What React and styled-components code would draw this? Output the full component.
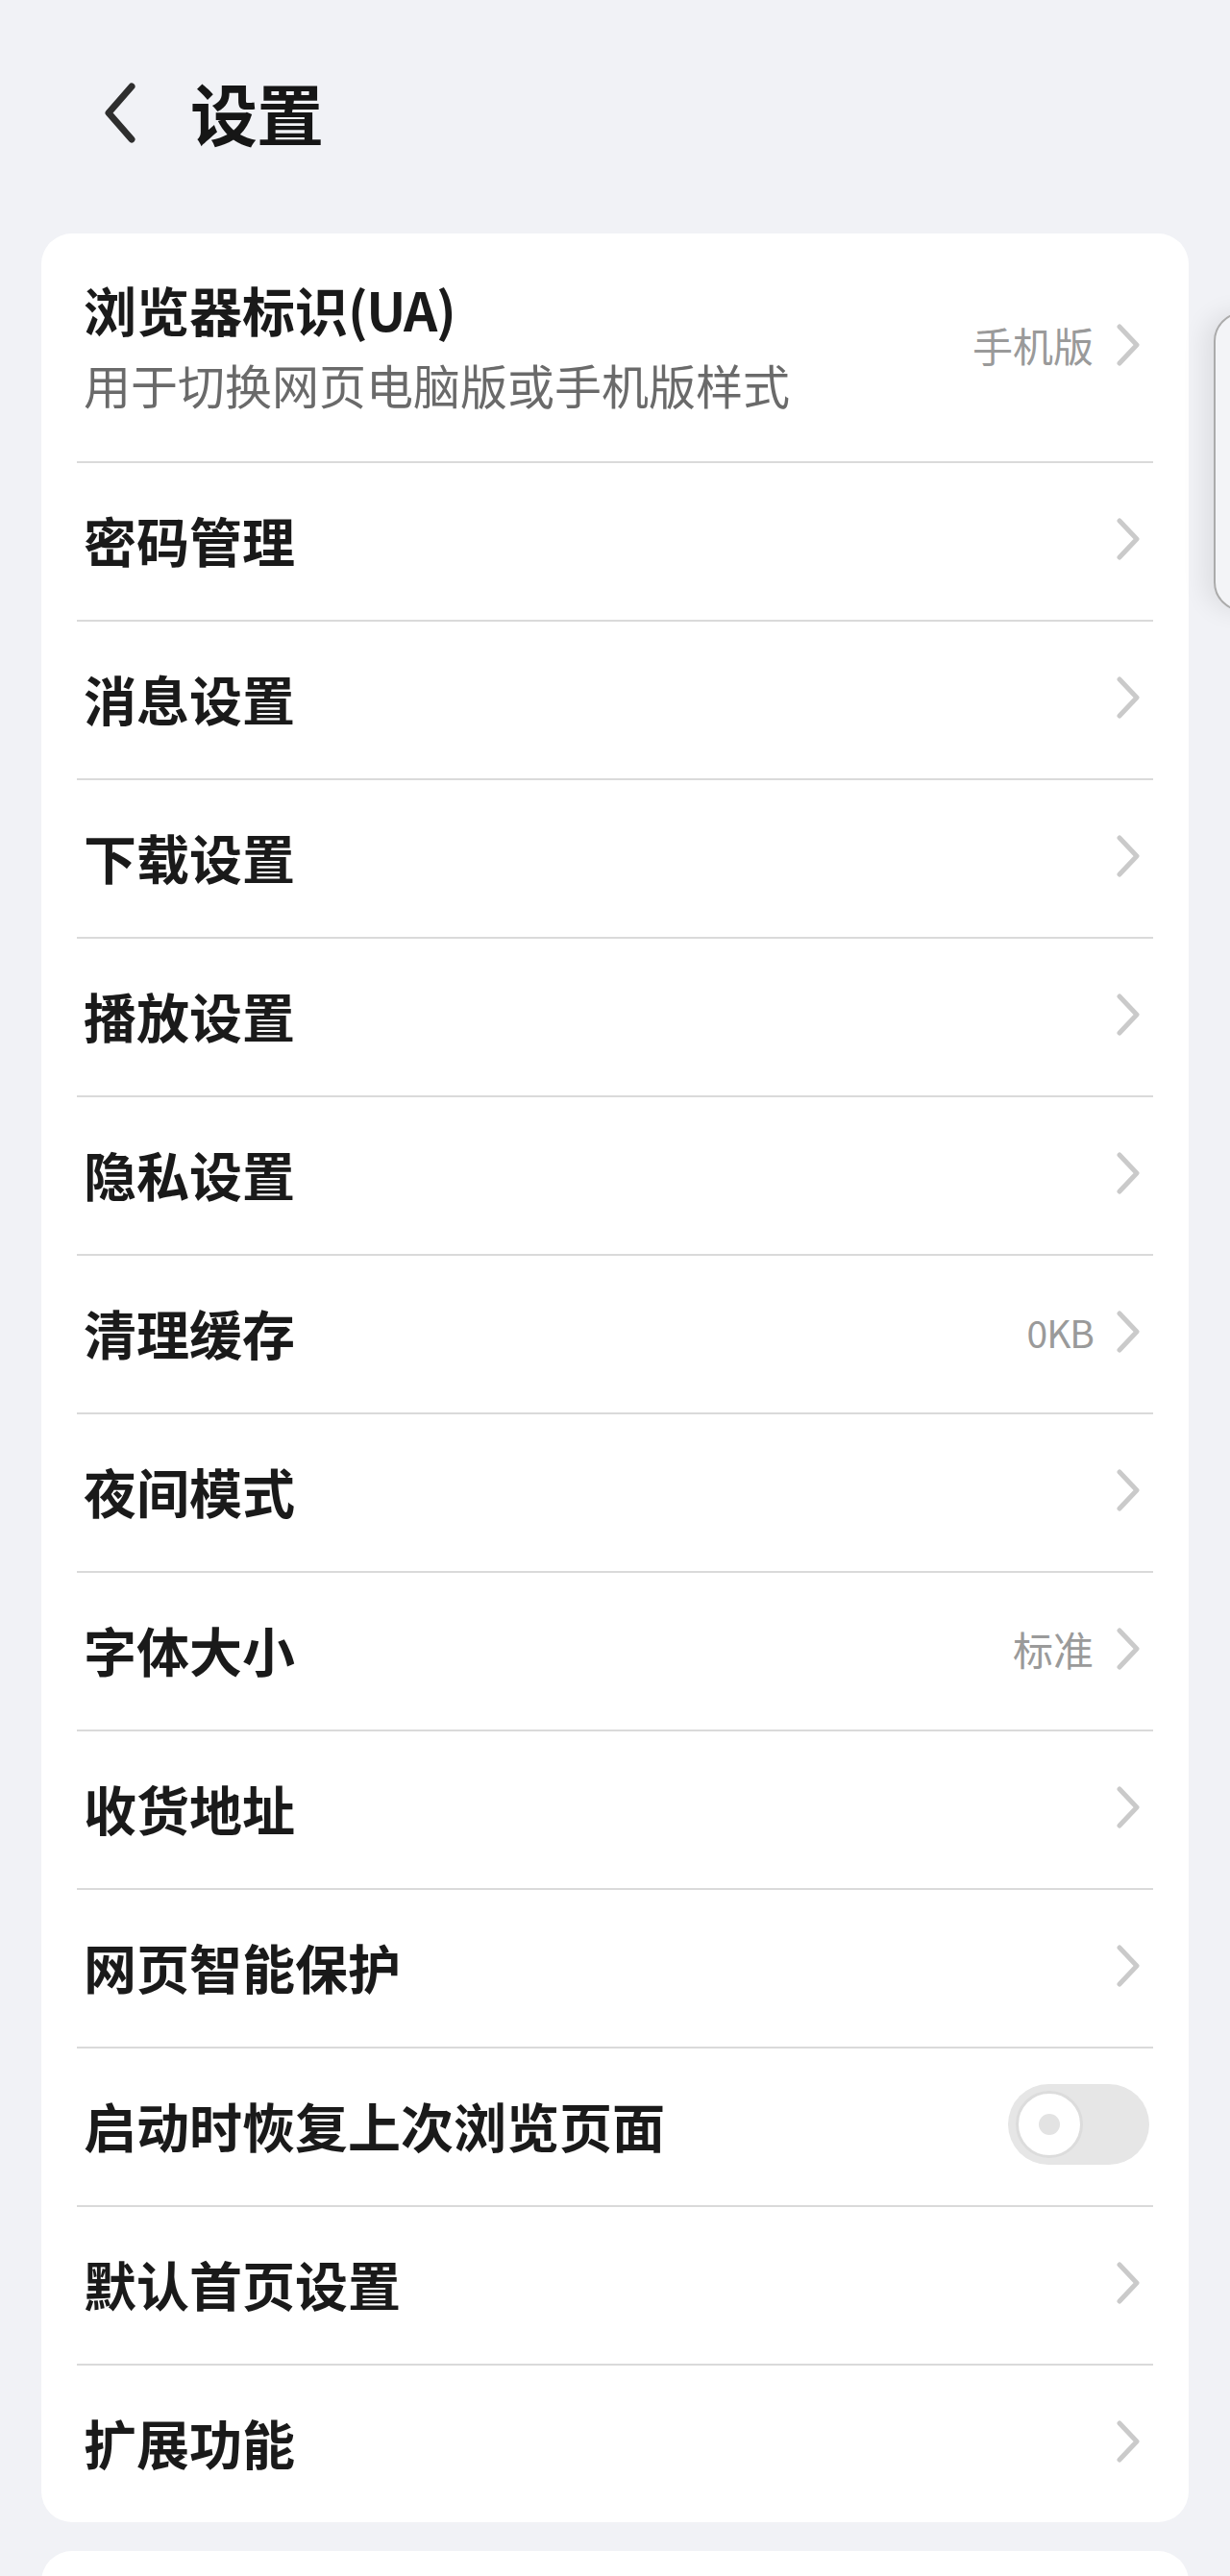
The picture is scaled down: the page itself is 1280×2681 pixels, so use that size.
import React, { useState } from 'react'
import styled, { createGlobalStyle } from 'styled-components'

const GlobalStyle = createGlobalStyle`
  html, body {
    margin: 0;
    padding: 0;
    background: #f1f2f6;
  }
  body {
    font-family: "Noto Sans CJK SC", "Noto Sans", Roboto, sans-serif;
    -webkit-font-smoothing: antialiased;
  }
  * { box-sizing: border-box; }
`

const Page = styled.div`
  position: relative;
  width: 1280px;
  height: 2681px;
  overflow: hidden;
  padding: 0 43px;
`

const Header = styled.div`
  display: flex;
  align-items: center;
  height: 236px;
  padding-left: 65px;
  padding-bottom: 2px;
`

const BackButton = styled.button`
  display: flex;
  align-items: center;
  justify-content: center;
  width: 33px;
  height: 63px;
  padding: 0;
  margin-right: 57px;
  border: none;
  background: none;
  cursor: pointer;
`

const Title = styled.h1`
  margin: 0;
  font-size: 70px;
  font-weight: 700;
  line-height: 1;
  color: #161616;
  letter-spacing: -1px;
`

const Card = styled.div`
  background: #fff;
  border-radius: 32px;
  margin-top: 7px;
  margin-bottom: 30px;
  padding-bottom: ${p => p.$pad || 0}px;
`

const Row = styled.div`
  display: flex;
  align-items: center;
  margin: 0 37px;
  padding: 0 14px 5px 7px;
  height: ${p => (p.$tall ? 237 : 165)}px;
  border-top: ${p => (p.$first ? 'none' : '2px solid #dadada')};
  cursor: pointer;
`

const Texts = styled.div`
  flex: 1;
  display: flex;
  flex-direction: column;
  gap: 26px;
`

const Label = styled.div`
  font-size: 55px;
  font-weight: 700;
  line-height: 1;
  color: #1a1a1a;
`

const Latin = styled.span`
  letter-spacing: -1.5px;
`

const Sub = styled.div`
  font-size: 49px;
  font-weight: 400;
  line-height: 1;
  color: #6a6a6a;
`

const Value = styled.span`
  font-size: ${p => (p.$latin ? 39 : 42)}px;
  color: #9a9a9a;
  margin-right: 24px;
  line-height: 1;
  letter-spacing: ${p => (p.$latin ? '-1px' : '0')};
`

const Switch = styled.div`
  position: relative;
  width: 147px;
  height: 84px;
  margin-right: -10px;
  border-radius: 42px;
  background: #e6e6e6;
  cursor: pointer;
`

const Knob = styled.div`
  position: absolute;
  top: 7px;
  left: ${p => (p.$on ? 71 : 8)}px;
  width: 70px;
  height: 70px;
  border-radius: 50%;
  background: #fff;
  border: 3px solid #dcdcdc;
  display: flex;
  align-items: center;
  justify-content: center;
  transition: left 0.2s;

  &::after {
    content: '';
    width: 22px;
    height: 22px;
    border-radius: 50%;
    background: #e3e3e3;
  }
`

const SidePeek = styled.div`
  position: absolute;
  top: 325px;
  left: 1263px;
  width: 80px;
  height: 311px;
  border: 2px solid #ababab;
  border-radius: 30px;
  background: #f3f4f7;
  box-shadow: -10px 0 24px rgba(0, 0, 0, 0.08);
`

const Chevron = () => (
  <svg width="24" height="44" viewBox="0 0 24 44">
    <polyline points="3,3 21,22 3,41" fill="none" stroke="#cacaca" strokeWidth="5" strokeLinecap="round" strokeLinejoin="round" />
  </svg>
)

const BackIcon = () => (
  <svg width="33" height="63" viewBox="0 0 33 63">
    <polyline points="29,4 5,31.5 29,59" fill="none" stroke="#2e2e2e" strokeWidth="7" strokeLinecap="round" strokeLinejoin="round" />
  </svg>
)

const items = [
  { label: '密码管理' },
  { label: '消息设置' },
  { label: '下载设置' },
  { label: '播放设置' },
  { label: '隐私设置' },
  { label: '清理缓存', value: '0KB', latin: true },
  { label: '夜间模式' },
  { label: '字体大小', value: '标准' },
  { label: '收货地址' },
  { label: '网页智能保护' },
  { label: '启动时恢复上次浏览页面', toggle: true },
  { label: '默认首页设置' },
  { label: '扩展功能' },
]

export default function App() {
  const [restore, setRestore] = useState(false)

  return (
    <>
      <GlobalStyle />
      <Page>
        <Header>
          <BackButton aria-label="返回">
            <BackIcon />
          </BackButton>
          <Title>设置</Title>
        </Header>

        <Card>
          <Row $first $tall>
            <Texts>
              <Label>浏览器标识<Latin>(UA)</Latin></Label>
              <Sub>用于切换网页电脑版或手机版样式</Sub>
            </Texts>
            <Value>手机版</Value>
            <Chevron />
          </Row>
          {items.map(it => (
            <Row key={it.label}>
              <Texts>
                <Label>{it.label}</Label>
              </Texts>
              {it.value && <Value $latin={it.latin}>{it.value}</Value>}
              {it.toggle ? (
                <Switch onClick={() => setRestore(!restore)}>
                  <Knob $on={restore} />
                </Switch>
              ) : (
                <Chevron />
              )}
            </Row>
          ))}
        </Card>

        <Card $pad={120} />

        <SidePeek />
      </Page>
    </>
  )
}
